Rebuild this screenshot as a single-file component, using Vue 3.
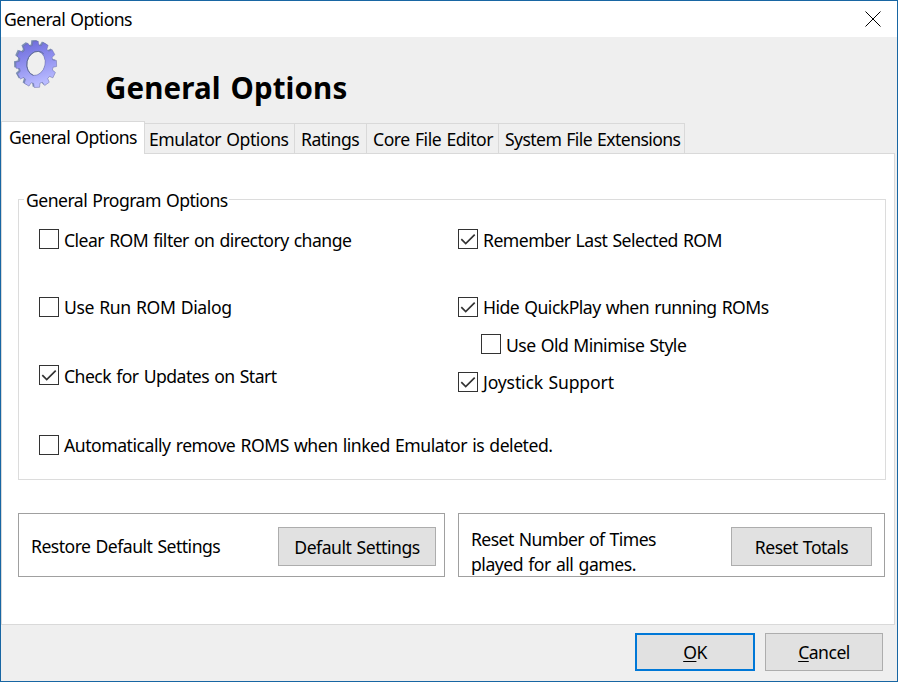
<script setup>
import { ref } from 'vue'

const tabs = [
  { label: 'General Options', cls: 't-general' },
  { label: 'Emulator Options', cls: 't-emulator' },
  { label: 'Ratings', cls: 't-ratings' },
  { label: 'Core File Editor', cls: 't-core' },
  { label: 'System File Extensions', cls: 't-system' },
]
const active = ref(0)

const left = ref([
  { label: 'Clear ROM filter on directory change', on: false, cls: 'c-clear' },
  { label: 'Use Run ROM Dialog', on: false, cls: 'c-run' },
  { label: 'Check for Updates on Start', on: true, cls: 'c-updates' },
  { label: 'Automatically remove ROMS when linked Emulator is deleted.', on: false, cls: 'c-auto' },
])
const right = ref([
  { label: 'Remember Last Selected ROM', on: true, cls: 'c-remember' },
  { label: 'Hide QuickPlay when running ROMs', on: true, cls: 'c-hide' },
  { label: 'Use Old Minimise Style', on: false, cls: 'c-old' },
  { label: 'Joystick Support', on: true, cls: 'c-joystick' },
])

// Outline of the gear: a toothed ellipse with an elliptical bore.
function gear(cx, cy, rx, ry, teeth) {
  const pts = []
  const step = (Math.PI * 2) / teeth
  for (let i = 0; i < teeth; i++) {
    const a = i * step - 0.035
    for (const [o, k] of [[-0.36, 0.83], [-0.25, 1], [0.25, 1], [0.36, 0.83]]) {
      const t = a + o * step
      pts.push(`${(cx + Math.cos(t) * rx * k).toFixed(2)} ${(cy + Math.sin(t) * ry * k).toFixed(2)}`)
    }
  }
  return `M${pts.join('L')}Z`
}
const bore = 'M26.5 12.4A9.9 12.3 12 0 1 21.5 36.4A9.9 12.3 12 0 1 26.5 12.4Z'
const gearBack = gear(22.7, 24.4, 20.8, 23.4, 12)
const gearFront = gear(24.2, 25.3, 20.5, 23.3, 12)
</script>

<template>
  <div class="window">
    <header class="titlebar">
      <span class="title">General Options</span>
      <svg class="close" width="16" height="16" viewBox="0 0 16 16"><path d="M.5.5L15.5 15.5M15.5.5L.5 15.5" /></svg>
    </header>

    <div class="banner">
      <svg class="gear" width="48" height="50" viewBox="0 0 48 50">
        <defs>
          <linearGradient id="gearFill" x1="0" y1="0" x2="0.25" y2="1">
            <stop offset="0" stop-color="#6867d8" />
            <stop offset="0.5" stop-color="#8e8eee" />
            <stop offset="1" stop-color="#b9bbff" />
          </linearGradient>
        </defs>
        <path :d="gearBack + bore" fill="#7c8fb5" fill-rule="evenodd" />
        <path :d="gearFront + bore" fill="url(#gearFill)" stroke="#666ba5" stroke-width=".5" fill-rule="evenodd" />
        <path class="rim" d="M21.5 36.4A9.9 12.3 12 0 1 26.5 12.4Q30 12.6 31.8 15" />
      </svg>
      <h1>General Options</h1>
    </div>

    <nav class="tabs">
      <button v-for="(t, i) in tabs" :key="t.label" class="tab" :class="[t.cls, { active: i === active }]" @click="active = i">
        <span>{{ t.label }}</span>
      </button>
    </nav>

    <main class="panel">
      <section class="group">
        <h2><span>General Program Options</span></h2>
        <div class="columns">
          <div v-for="(col, n) in [left, right]" :key="n" class="column">
            <label v-for="c in col" :key="c.label" class="check" :class="c.cls" @click="c.on = !c.on">
              <span class="box">
                <svg v-if="c.on" width="18" height="18" viewBox="0 0 18 18"><path d="M2.3 9.2L6.7 13.5L15.7 4.6" /></svg>
              </span>
              <span class="text">{{ c.label }}</span>
            </label>
          </div>
        </div>
      </section>

      <div class="cards">
        <section class="card">
          <p class="restore">Restore Default Settings</p>
          <button class="btn defaults"><span>Default Settings</span></button>
        </section>
        <section class="card">
          <p class="reset"><span class="l1">Reset Number of Times</span><br><span class="l2">played for all games.</span></p>
          <button class="btn totals"><span>Reset Totals</span></button>
        </section>
      </div>
    </main>

    <footer class="actions">
      <button class="btn ok"><span><u>O</u>K</span></button>
      <button class="btn cancel"><span><u>C</u>ancel</span></button>
    </footer>
  </div>
</template>

<style>
body { margin: 0; overflow: hidden; }
</style>

<style scoped>
* { box-sizing: border-box; }
.window {
  width: 898px; height: 682px;
  display: flex; flex-direction: column;
  border: 1px solid #1866a3;
  background: #efefef; color: #000;
  font: 17.6px/24px "Noto Sans", "Open Sans", sans-serif;
  letter-spacing: -0.52px;
  word-spacing: 1px;
  white-space: nowrap;
}
button { font: inherit; letter-spacing: inherit; word-spacing: inherit; color: inherit; padding: 0; margin: 0; cursor: default; }
h1, h2, p { margin: 0; font-weight: 400; font-size: inherit; }
.titlebar { height: 36px; flex: none; background: #fff; display: flex; justify-content: space-between; padding: 6px 16.5px 0 3px; }
.close { margin-top: 3.5px; }
.close path { stroke: #000; stroke-width: 1; fill: none; }
.banner { height: 84px; flex: none; display: flex; padding-left: 11px; }
.gear { margin-top: 2px; flex: none; }
.rim { fill: none; stroke: #626e9b; stroke-width: 1; }
h1 { font-size: 29.5px; line-height: 40px; font-weight: 700; margin: 31px 0 0 45px; letter-spacing: 0.12px; word-spacing: 2px; }
.tabs { height: 32px; flex: none; display: flex; align-items: flex-end; }
.tab { height: 30px; border: 1px solid #d9d9d9; border-left: 0; border-bottom: 0; background: #efefef; display: flex; align-items: center; padding: 0 0 0 6px; }
.tab.active { position: relative; z-index: 1; height: 33px; margin-bottom: -1px; background: #fff; padding: 0 0 2px 7px; border-left: 1px solid #d9d9d9; }
.t-general { width: 144px; }
.t-emulator { width: 150px; padding-left: 4px; letter-spacing: -0.45px; }
.t-ratings { width: 72px; }
.t-core { width: 132px; letter-spacing: -0.45px; }
.t-system { width: 186px; letter-spacing: -0.58px; }
.panel { width: 894px; height: 472px; flex: none; background: #fff; border: 1px solid #d9d9d9; padding: 45px 8px 0 16px; }
.group { height: 281px; width: 868px; border: 1px solid #dcdcdc; }
h2 { height: 24px; margin: -12px 0 0 5px; }
h2 span { background: #fff; padding: 0 1px 0 2px; }
.columns { display: grid; grid-template-columns: 419px 1fr; padding: 17px 0 0 20px; }
.column { display: flex; flex-direction: column; }
.check { display: flex; height: 20px; gap: 5px; align-items: center; margin-bottom: 48px; }
.c-updates { margin-bottom: 50px; }
.c-hide { margin-bottom: 17px; }
.c-old { margin: 0 0 18px 23px; }
.box { width: 20px; height: 20px; flex: none; border: 1px solid #333; background: #fff; }
.box svg { display: block; }
.box path { fill: none; stroke: #333; stroke-width: 1.7; }
.check .text { padding-top: 1px; }
.c-run .text, .c-hide .text, .c-auto .text, .c-joystick .text { padding: 0 0 1px; }
.c-run .text { letter-spacing: -0.38px; }
.c-auto .text { letter-spacing: -0.47px; }
.c-joystick .text { letter-spacing: -0.15px; }
.cards { display: flex; gap: 13px; padding-top: 33px; }
.card { width: 427px; height: 64px; border: 1px solid #a0a0a0; display: flex; justify-content: space-between; padding: 13px 8px 0 12px; }
.card + .card { padding-right: 12px; }
.restore { padding-top: 7px; }
.reset { line-height: 25px; }
.l1 { letter-spacing: -0.57px; }
.l2 { letter-spacing: -0.47px; }
.btn { border: 1px solid #adadad; background: #e1e1e1; height: 39px; padding-top: 1px; text-align: center; }
.defaults { width: 158px; letter-spacing: -0.47px; }
.totals { width: 141px; }
.actions { display: flex; justify-content: flex-end; gap: 10px; padding: 8px 14px 0 0; }
.actions .btn { height: 38px; padding: 0 0 1px; }
.ok { width: 120px; }
.actions .ok { border: 2px solid #0078d7; }
.cancel { width: 118px; }
u { text-underline-offset: 2px; text-decoration-thickness: 1px; }
</style>
